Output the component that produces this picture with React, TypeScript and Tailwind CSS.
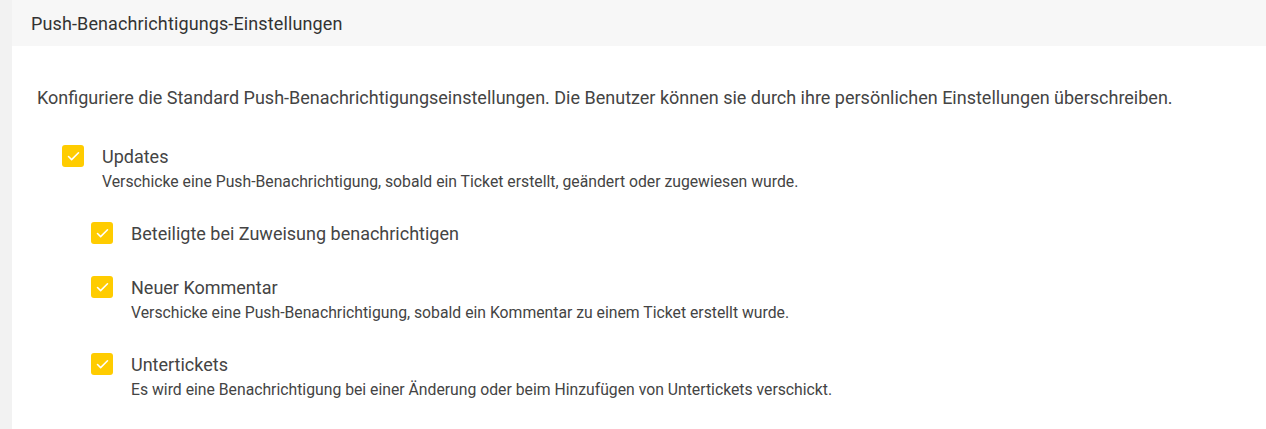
import { Check } from 'lucide-react';

type Option = {
  label: string;
  description?: string;
  nested?: boolean;
};

const options: Option[] = [
  {
    label: "Updates",
    description: "Verschicke eine Push-Benachrichtigung, sobald ein Ticket erstellt, geändert oder zugewiesen wurde."
  },
  { label: "Beteiligte bei Zuweisung benachrichtigen", nested: true },
  {
    label: "Neuer Kommentar",
    description: "Verschicke eine Push-Benachrichtigung, sobald ein Kommentar zu einem Ticket erstellt wurde.",
    nested: true
  },
  {
    label: "Untertickets",
    description: "Es wird eine Benachrichtigung bei einer Änderung oder beim Hinzufügen von Untertickets verschickt.",
    nested: true
  }
];

const CheckBox = () => (
  <div className="w-[22px] h-[22px] shrink-0 rounded-[3px] bg-[#ffcc00] flex items-center justify-center">
    <Check className="w-[15px] h-[15px] text-white" strokeWidth={2.5} />
  </div>
);

const App = () => {
  return (
    <div className="min-h-[429px] bg-[#f2f2f2] pl-3 font-['Roboto',sans-serif]">
      <div className="bg-white min-h-[429px]">
        <div className="h-[46px] bg-[#f7f7f7] flex items-center pl-[19px]">
          <h2 className="text-[18px] text-[#333] font-normal tracking-[0.12px]">Push-Benachrichtigungs-Einstellungen</h2>
        </div>

        <div className="pl-[25px] pt-[38px]">
          <p className="text-[18px] text-[#444] leading-[27px]">
            Konfiguriere die Standard Push-Benachrichtigungseinstellungen. Die Benutzer können sie durch ihre persönlichen Einstellungen überschreiben.
          </p>

          <div className="mt-[32px] flex flex-col gap-[27px]">
            {options.map((option, index) => (
              <div key={index} className={`flex gap-[18px] ${option.nested ? 'pl-[54px]' : 'pl-[25px]'}`}>
                <div className="pt-[2px]">
                  <CheckBox />
                </div>
                <div>
                  <div className="text-[18px] text-[#444] leading-[27px]">{option.label}</div>
                  {option.description && (
                    <div className="text-[15.75px] text-[#444] leading-[23px]">{option.description}</div>
                  )}
                </div>
              </div>
            ))}
          </div>
        </div>
      </div>
    </div>
  );
};

export default App;
